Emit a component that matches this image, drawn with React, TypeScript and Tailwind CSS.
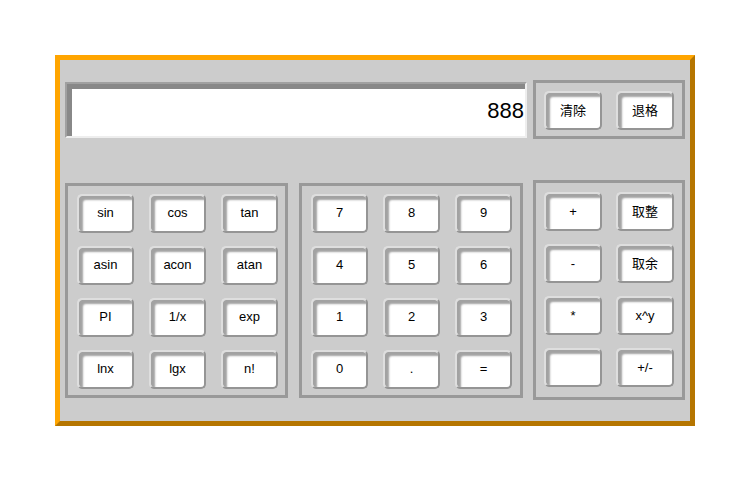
import React from 'react'

// ─── Calculator keys ───────────────────────────────────────────────────────

const sciKeys = ['sin', 'cos', 'tan', 'asin', 'acon', 'atan', 'PI', '1/x', 'exp', 'lnx', 'lgx', 'n!']
const numKeys = ['7', '8', '9', '4', '5', '6', '1', '2', '3', '0', '.', '=']
const opKeys = ['+', '取整', '-', '取余', '*', 'x^y', '', '+/-']

function Key({ label, wide }: { label: string; wide?: boolean }) {
  return (
    <button
      className={
        'flex h-[39px] items-center justify-center rounded-[5px] border-2 border-t-[#dedede] border-l-[#dedede] border-r-[#959595] border-b-[#959595] bg-white text-[13px] text-black shadow-[inset_4px_4px_2px_#a2a2a2] ' +
        (wide ? 'w-[58px]' : 'w-[57px]')
      }
    >
      {label}
    </button>
  )
}

export default function App() {
  return (
    <div
      className="flex min-h-[493px] w-full justify-center bg-white pt-[55px]"
      style={{ fontFamily: '"Liberation Sans", Arial, "Noto Sans CJK SC", sans-serif' }}
    >
      <div className="h-[371px] w-[640px] border-[5px] border-t-[#ffa500] border-l-[#ffa500] border-r-[#b57500] border-b-[#b57500] bg-[#cccccc] px-[5px] pt-[20px]">
        {/* display row */}
        <div className="flex items-center gap-[6px]">
          <div className="flex h-[56px] w-[462px] items-center justify-end border-2 border-t-[#a0a0a0] border-l-[#a0a0a0] border-r-[#eeeeee] border-b-[#eeeeee] bg-white pr-[1px] pt-[1px] text-[22px] text-black shadow-[inset_5px_5px_0_#888888]">
            888
          </div>
          <div className="flex h-[59px] w-[152px] gap-[14px] border-[3px] border-[#999] pl-[8px] pt-[8px]">
            <Key label="清除" wide />
            <Key label="退格" wide />
          </div>
        </div>

        {/* keypad row */}
        <div className="mt-[41px] flex items-center">
          <div className="grid w-[223px] grid-cols-[57px_57px_57px] gap-x-[15px] gap-y-[13px] border-[3px] border-[#999] pb-[6px] pl-[9px] pt-[8px]">
            {sciKeys.map((k) => (
              <Key key={k} label={k} />
            ))}
          </div>
          <div className="ml-[11px] grid w-[224px] grid-cols-[57px_57px_57px] gap-x-[15px] gap-y-[13px] border-[3px] border-[#999] pb-[6px] pl-[9px] pt-[8px]">
            {numKeys.map((k) => (
              <Key key={k} label={k} />
            ))}
          </div>
          <div className="ml-[10px] grid w-[152px] grid-cols-[58px_58px] gap-x-[14px] gap-y-[13px] border-[3px] border-[#999] pb-[10px] pl-[8px] pt-[9px]">
            {opKeys.map((k, i) => (
              <Key key={i} label={k} wide />
            ))}
          </div>
        </div>
      </div>
    </div>
  )
}
